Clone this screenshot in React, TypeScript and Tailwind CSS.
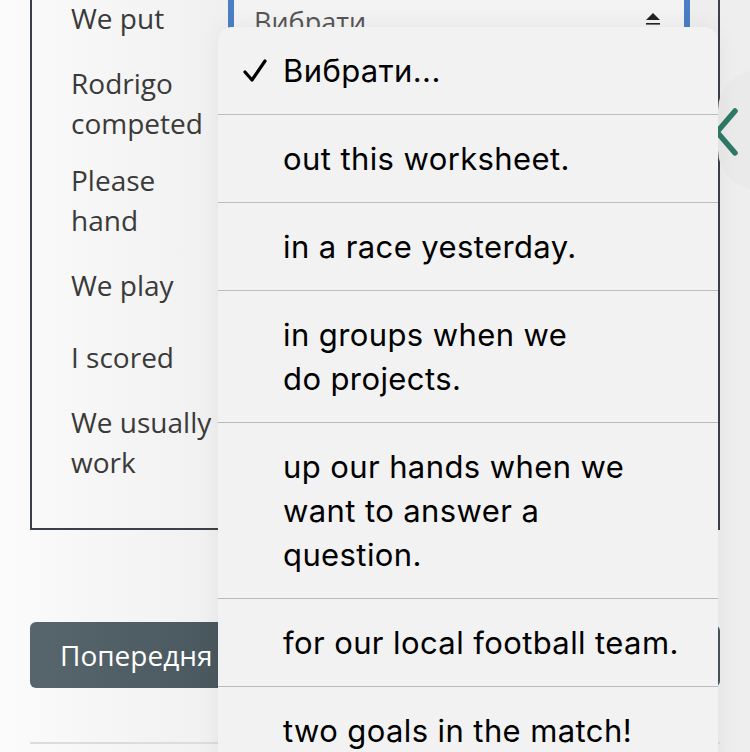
import React from "react"

const labels = [
  { text: ["We put"], mt: "mt-[16px]" },
  { text: ["Rodrigo", "competed"], mt: "mt-[25px]" },
  { text: ["Please", "hand"], mt: "mt-[17px]" },
  { text: ["We play"], mt: "mt-[25px]" },
  { text: ["I scored"], mt: "mt-[32px]" },
  { text: ["We usually", "work"], mt: "mt-[25px]" },
]

const options = [
  { lines: ["Вибрати..."], checked: true },
  { lines: ["out this worksheet."] },
  { lines: ["in a race yesterday."] },
  { lines: ["in groups when we", "do projects."] },
  { lines: ["up our hands when we", "want to answer a", "question."] },
  { lines: ["for our local football team."] },
  { lines: ["two goals in the match!"] },
]

function SelectArrow() {
  return (
    <svg width="18" height="14" viewBox="0 0 18 14" className="text-[#222]">
      <path d="M9 1 L16 8 L2 8 Z" fill="currentColor" />
      <rect x="2" y="11" width="14" height="1.6" fill="currentColor" />
    </svg>
  )
}

function Check() {
  return (
    <svg width="26" height="26" viewBox="0 0 26 26">
      <path d="M3 14 L10 22 L23 3" fill="none" stroke="#000" strokeWidth="3.2" strokeLinecap="round" strokeLinejoin="round" />
    </svg>
  )
}

function OptionsMenu() {
  return (
    <div className="absolute left-[218px] top-[27px] w-[500px] rounded-t-[14px] bg-[#f2f2f3] shadow-[0_0_24px_rgba(0,0,0,0.06)] font-['Inter',sans-serif] text-black">
      {options.map((o, i) => (
        <div
          key={i}
          className={`relative pl-[65px] pr-4 pt-[22px] pb-[21px] text-[31px] leading-[44px] tracking-[0.4px] ${
            i > 0 ? "border-t border-[#bcbcbe]" : ""
          }`}
        >
          {o.checked && (
            <span className="absolute left-[24px] top-[31px]">
              <Check />
            </span>
          )}
          {o.lines.map((l) => (
            <div key={l} className="whitespace-nowrap">{l}</div>
          ))}
        </div>
      ))}
    </div>
  )
}

export default function App() {
  return (
    <div className="relative w-[750px] h-[752px] overflow-hidden bg-[linear-gradient(to_right,#fbfbfb_0%,#f0f0f0_30%,#eeeeee_100%)] font-['Open_Sans',sans-serif]">
      {/* exercise box */}
      <div className="ml-[30px] mt-[-20px] w-[690px] h-[550px] border-2 border-[#3b4146] relative">
        <div className="flex">
          <div className="pl-[39px] w-[196px] text-[28px] leading-[40px] text-[#3a3a3a]">
            {labels.map((l, i) => (
              <div key={i} className={l.mt}>
                {l.text.map((t) => (
                  <div key={t} className="whitespace-nowrap">{t}</div>
                ))}
              </div>
            ))}
          </div>
          <div className="mt-[-10px] h-[58px] w-[462px] border-x-[6px] border-[#4a7fc3] bg-[#f3f3f3] flex items-end justify-between pl-[20px] pr-[22px]">
            <span className="text-[27px] leading-[40px] text-[#555] mb-[-12px]">Вибрати</span>
            <span className="mb-[4px]">
              <SelectArrow />
            </span>
          </div>
        </div>
      </div>

      {/* side arrow button */}
      <div className="absolute left-[718px] top-[70px] w-[60px] h-[120px] rounded-l-[40px] bg-[#eaeaea] flex items-center">
        <svg width="24" height="50" viewBox="0 0 24 50" className="ml-[-4px] mt-[6px]">
          <path d="M21 3 L3 24 L21 45" fill="none" stroke="#2e7a66" strokeWidth="5.5" strokeLinecap="round" strokeLinejoin="round" />
        </svg>
      </div>

      {/* nav buttons */}
      <div className="ml-[30px] mt-[92px] w-[690px] flex justify-between">
        <button className="h-[66px] w-[240px] rounded-[6px] bg-[linear-gradient(to_right,#56666c,#46555b)] text-left pl-[30px] text-[28px] text-white">
          Попередня
        </button>
        <button className="h-[62px] mt-[3px] w-[200px] rounded-[6px] bg-[#46555b]" />
      </div>

      <div className="ml-[30px] mt-[54px] w-[690px] h-[2px] bg-[#dcdcdc]" />

      <OptionsMenu />
    </div>
  )
}
